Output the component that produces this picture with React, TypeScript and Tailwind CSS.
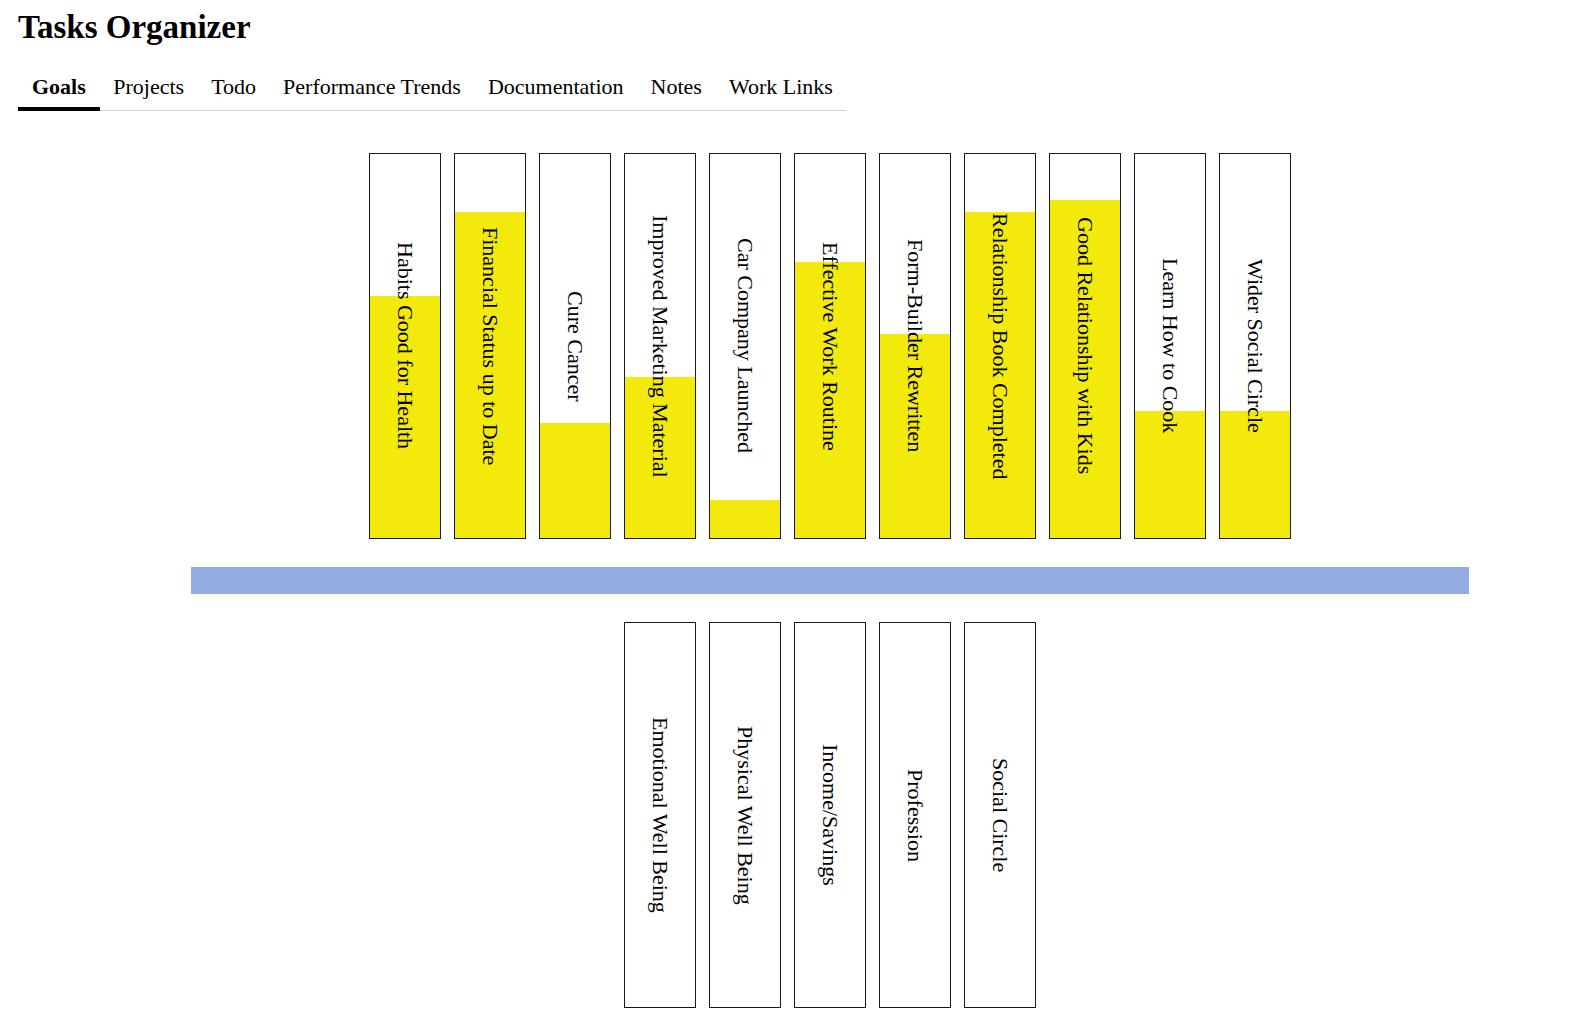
import React from "react";

const goals: { title: string; pct: number }[] = [
  { title: "Habits Good for Health", pct: 63 },
  { title: "Financial Status up to Date", pct: 85 },
  { title: "Cure Cancer", pct: 30 },
  { title: "Improved Marketing Material", pct: 42 },
  { title: "Car Company Launched", pct: 10 },
  { title: "Effective Work Routine", pct: 72 },
  { title: "Form-Builder Rewritten", pct: 53 },
  { title: "Relationship Book Completed", pct: 85 },
  { title: "Good Relationship with Kids", pct: 88 },
  { title: "Learn How to Cook", pct: 33 },
  { title: "Wider Social Circle", pct: 33 },
];

const areas = [
  "Emotional Well Being",
  "Physical Well Being",
  "Income/Savings",
  "Profession",
  "Social Circle",
];

const tabs = [
  "Goals",
  "Projects",
  "Todo",
  "Performance Trends",
  "Documentation",
  "Notes",
  "Work Links",
];

function Card({ title, pct }: { title: string; pct?: number }) {
  return (
    <div className="relative w-[72px] h-[386px] border border-[#1a1a1a] bg-white overflow-hidden flex items-center justify-center">
      {pct !== undefined && (
        <div
          className="absolute left-0 right-0 bottom-0 bg-[#f3ea0c]"
          style={{ height: `${pct}%` }}
        />
      )}
      <span className="relative text-[22px] leading-[24px] text-black whitespace-nowrap [writing-mode:vertical-rl]">
        {title}
      </span>
    </div>
  );
}

export default function App() {
  return (
    <div className="min-h-screen w-full bg-white text-black font-['Liberation_Serif','Times_New_Roman',serif]">
      <div className="px-[18px]">
        <h1 className="pt-[11px] text-[33px] leading-[32px] font-bold">
          Tasks Organizer
        </h1>
        <div className="mt-[25px] inline-flex border-b border-[#d4d4d4]">
          {tabs.map((t, i) => (
            <div
              key={t}
              className={
                i === 0
                  ? "px-[14px] pt-[8px] pb-[9px] text-[22px] leading-[22px] font-bold border-b-4 border-black -mb-px"
                  : "px-[13.5px] pt-[8px] pb-[9px] text-[22px] leading-[22px] border-b-4 border-transparent -mb-px"
              }
            >
              {t}
            </div>
          ))}
        </div>
      </div>

      <div className="ml-[191px] w-[1278px] mt-[42px] flex flex-col items-center">
        <div className="flex gap-[13px]">
          {goals.map((g) => (
            <Card key={g.title} title={g.title} pct={g.pct} />
          ))}
        </div>
        <div className="mt-[28px] h-[27px] w-full bg-[#92abe0]" />
        <div className="mt-[28px] flex gap-[13px]">
          {areas.map((a) => (
            <Card key={a} title={a} />
          ))}
        </div>
      </div>
    </div>
  );
}
